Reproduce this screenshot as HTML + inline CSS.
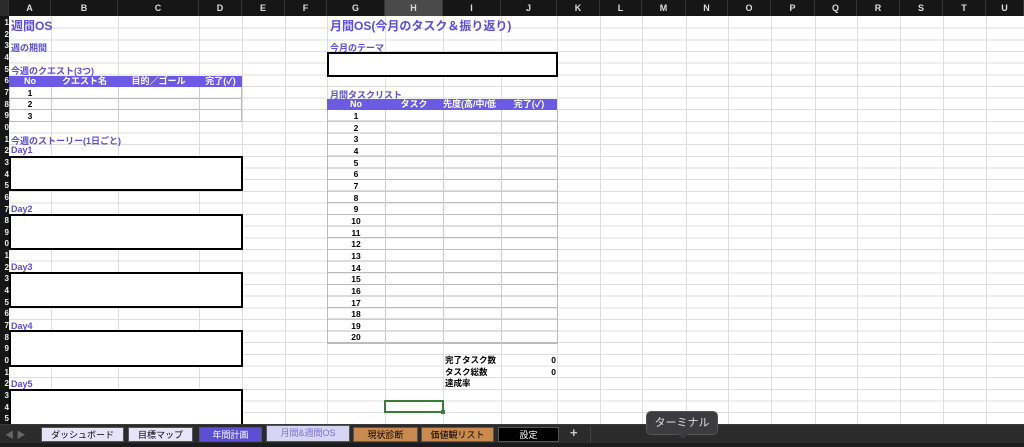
<!DOCTYPE html>
<html><head><meta charset="utf-8"><style>
*{margin:0;padding:0;box-sizing:border-box}
body{width:1024px;height:447px;overflow:hidden;position:relative;background:#fff;font-family:"Liberation Sans","Noto Sans CJK JP",sans-serif;}
.a{position:absolute}
.grid{position:absolute;left:0;top:17px;width:1024px;height:408px;background:repeating-linear-gradient(to bottom,transparent 0,transparent 10.65px,#dedede 10.65px,#dedede 11.65px)}
.v{position:absolute;top:16px;width:1px;height:408px;background:#dedede}
.ch{position:absolute;top:0;height:16px;background:#161616;color:#ddd;font-size:9px;font-weight:bold;text-align:center;line-height:16px;border-right:1px solid #333}
.rh{position:absolute;left:0;top:16px;width:9px;height:408px;background:#161616;overflow:hidden;color:#eee;font-size:8px;font-weight:bold;line-height:11.65px;text-align:right;padding-top:1px}
.t{position:absolute;color:#5b4fd6;font-weight:bold;font-size:9px;white-space:nowrap}
.box{position:absolute;border:2px solid #000;background:#fff}
.hd{position:absolute;background:#6b5be2;color:#fff;font-weight:bold;font-size:9px;height:11px;line-height:11px}
.hd span{position:absolute;text-align:center}
.n{position:absolute;font-size:8.5px;color:#000;text-align:center;font-weight:bold}
.tab{position:absolute;top:427px;height:15px;font-size:9px;text-align:center;line-height:15px;color:#000;border:1px solid #555}
</style></head><body>
<div class="grid"></div>
<div class="rh">1<br>2<br>3<br>4<br>5<br>6<br>7<br>8<br>9<br>0<br>1<br>2<br>3<br>4<br>5<br>6<br>7<br>8<br>9<br>0<br>1<br>2<br>3<br>4<br>5<br>6<br>7<br>8<br>9<br>0<br>1<br>2<br>3<br>4<br>5</div>
<div class="v" style="left:51px"></div><div class="v" style="left:118px"></div><div class="v" style="left:199px"></div><div class="v" style="left:242px"></div><div class="v" style="left:285px"></div><div class="v" style="left:327px"></div><div class="v" style="left:385px"></div><div class="v" style="left:443px"></div><div class="v" style="left:501px"></div><div class="v" style="left:557px"></div><div class="v" style="left:600px"></div><div class="v" style="left:642px"></div><div class="v" style="left:686px"></div><div class="v" style="left:728px"></div><div class="v" style="left:771px"></div><div class="v" style="left:815px"></div><div class="v" style="left:857px"></div><div class="v" style="left:900px"></div><div class="v" style="left:943px"></div><div class="v" style="left:986px"></div>
<div class="ch" style="left:0;width:9px;background:#2a2a2a"></div>
<div class="ch" style="left:9px;width:42px">A</div><div class="ch" style="left:51px;width:67px">B</div><div class="ch" style="left:118px;width:81px">C</div><div class="ch" style="left:199px;width:43px">D</div><div class="ch" style="left:242px;width:43px">E</div><div class="ch" style="left:285px;width:42px">F</div><div class="ch" style="left:327px;width:58px">G</div><div class="ch" style="left:385px;width:58px;background:#4a4a4a">H</div><div class="ch" style="left:443px;width:58px">I</div><div class="ch" style="left:501px;width:56px">J</div><div class="ch" style="left:557px;width:43px">K</div><div class="ch" style="left:600px;width:42px">L</div><div class="ch" style="left:642px;width:44px">M</div><div class="ch" style="left:686px;width:42px">N</div><div class="ch" style="left:728px;width:43px">O</div><div class="ch" style="left:771px;width:44px">P</div><div class="ch" style="left:815px;width:42px">Q</div><div class="ch" style="left:857px;width:43px">R</div><div class="ch" style="left:900px;width:43px">S</div><div class="ch" style="left:943px;width:43px">T</div><div class="ch" style="left:986px;width:38px">U</div>

<div class="t" style="left:11px;top:17px;font-size:12px">週間OS</div>
<div class="t" style="left:11px;top:41px">週の期間</div>
<div class="t" style="left:11px;top:64px">今週のクエスト(3つ)</div>
<div class="hd" style="left:9px;top:76px;width:233px"><span style="left:0;width:42px">No</span><span style="left:42px;width:67px">クエスト名</span><span style="left:109px;width:81px">目的／ゴール</span><span style="left:190px;width:43px">完了(✓)</span></div>
<div class="a" style="left:9px;top:87px;width:233px;height:35px;border:1px solid #bbb;border-top:none;background:linear-gradient(#bbb,#bbb) 0 11px/100% 1px no-repeat,linear-gradient(#bbb,#bbb) 0 22px/100% 1px no-repeat"></div>
<div class="a" style="left:51px;top:87px;width:1px;height:35px;background:#ccc"></div>
<div class="a" style="left:118px;top:87px;width:1px;height:35px;background:#ccc"></div>
<div class="a" style="left:199px;top:87px;width:1px;height:35px;background:#ccc"></div>
<div class="n" style="width:42px;top:88px;left:9px">1</div><div class="n" style="left:9px;width:42px;top:99px">2</div><div class="n" style="left:9px;width:42px;top:111px">3</div>
<div class="t" style="left:11px;top:134px">今週のストーリー(1日ごと)</div>
<div class="t" style="left:11px;top:145px">Day1</div>
<div class="box" style="left:9px;top:156px;width:234px;height:35px"></div>
<div class="t" style="left:11px;top:204px">Day2</div>
<div class="box" style="left:9px;top:214px;width:234px;height:36px"></div>
<div class="t" style="left:11px;top:262px">Day3</div>
<div class="box" style="left:9px;top:272px;width:234px;height:36px"></div>
<div class="t" style="left:11px;top:321px">Day4</div>
<div class="box" style="left:9px;top:330px;width:234px;height:37px"></div>
<div class="t" style="left:11px;top:379px">Day5</div>
<div class="box" style="left:9px;top:389px;width:234px;height:37px"></div>

<div class="t" style="left:330px;top:17px;font-size:12px">月間OS(今月のタスク＆振り返り)</div>
<div class="t" style="left:330px;top:41px">今月のテーマ</div>
<div class="box" style="left:327px;top:52px;width:231px;height:25px"></div>
<div class="t" style="left:330px;top:88px">月間タスクリスト</div>
<div class="hd" style="left:327px;top:99px;width:230px;overflow:hidden"><span style="left:0;width:58px">No</span><span style="left:58px;width:58px">タスク</span><span style="left:116px;width:58px;text-align:left;white-space:nowrap;overflow:hidden">先度(高/中/低</span><span style="left:174px;width:56px">完了(✓)</span></div>
<div class="a" style="left:327px;top:110px;width:231px;height:234px;border:1px solid #bbb;border-top:none;background:repeating-linear-gradient(to bottom,transparent 0,transparent 10.65px,#bbb 10.65px,#bbb 11.65px)"></div>
<div class="a" style="left:385px;top:110px;width:1px;height:234px;background:#ccc"></div>
<div class="a" style="left:443px;top:110px;width:1px;height:234px;background:#ccc"></div>
<div class="a" style="left:501px;top:110px;width:1px;height:234px;background:#ccc"></div>
<div class="a" style="left:327px;top:111px;width:58px;font-size:8.5px;font-weight:bold;text-align:center;line-height:11.65px">1<br>2<br>3<br>4<br>5<br>6<br>7<br>8<br>9<br>10<br>11<br>12<br>13<br>14<br>15<br>16<br>17<br>18<br>19<br>20</div>
<div class="a" style="left:445px;top:355px;font-size:8.5px;font-weight:bold;line-height:11.65px">完了タスク数<br>タスク総数<br>達成率</div>
<div class="a" style="left:540px;top:355px;font-size:8.5px;font-weight:bold;line-height:11.65px;width:16px;text-align:right">0<br>0</div>
<div class="a" style="left:384px;top:400px;width:60px;height:13px;border:2px solid #3b7a3b"></div>
<div class="a" style="left:441px;top:410px;width:4px;height:4px;background:#3b7a3b"></div>

<div class="a" style="left:0;top:424px;width:1024px;height:23px;background:#2b2b2b;border-top:1px solid #3a3a3a"></div>
<div class="a" style="left:0;top:443px;width:1024px;height:4px;background:#1c1c1c"></div>
<div class="a" style="left:5px;top:428px;color:#666;font-size:9px">◀ ▶</div>
<div class="tab" style="left:41px;width:83px;background:#e8e4f8">ダッシュボード</div>
<div class="tab" style="left:128px;width:65px;background:#e8e4f8">目標マップ</div>
<div class="tab" style="left:199px;width:63px;background:#5b4fd6;color:#fff">年間計画</div>
<div class="tab" style="left:266px;width:84px;background:#d8d4f4;color:#7a70d8;top:425px;height:17px">月間&amp;週間OS</div>
<div class="tab" style="left:353px;width:65px;background:#c98a4e">現状診断</div>
<div class="tab" style="left:421px;width:73px;background:#c98a4e">価値観リスト</div>
<div class="tab" style="left:498px;width:61px;background:#000;color:#fff">設定</div>
<div class="a" style="left:570px;top:425px;color:#ccc;font-size:13px;font-weight:bold">+</div>
<div class="a" style="left:590px;top:427px;width:1px;height:15px;background:#444"></div>
<div class="a" style="left:646px;top:411px;width:72px;height:24px;background:#3c3c3e;border:1px solid #555;border-radius:5px;color:#ddd;font-size:11px;text-align:center;line-height:22px">ターミナル</div>
<div class="a" style="left:678px;top:434px;width:0;height:0;border-left:5px solid transparent;border-right:5px solid transparent;border-top:5px solid #3c3c3e"></div>
</body></html>
